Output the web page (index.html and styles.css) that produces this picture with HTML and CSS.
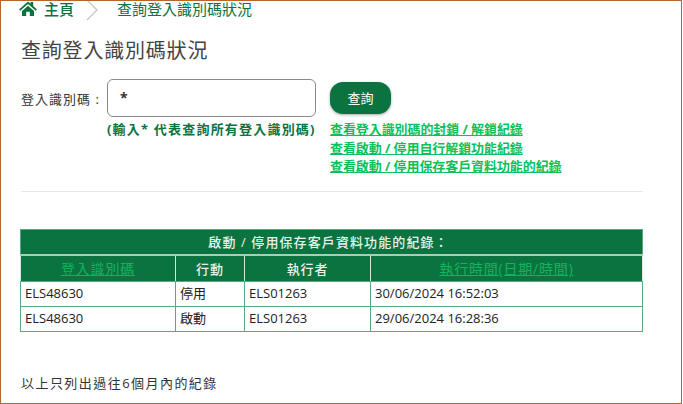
FILE: index.html
```html
<!DOCTYPE html>
<html lang="zh-Hant">
<head>
<meta charset="utf-8">
<title>查詢登入識別碼狀況</title>
<link rel="stylesheet" href="styles.css">
</head>
<body>
<div class="frame">
  <nav class="crumbs">
    <svg class="home" viewBox="0 0 18 15" width="18" height="15"><path d="M9 0.5 L11.5 2.7 V1 H14.2 V5.1 L18 8.4 L16.8 9.8 L9 3 L1.2 9.8 L0 8.4 Z M3 10 L9 4.8 L15 10 V15 H10.8 V10.8 H7.2 V15 H3 Z" fill="#0b7340"/></svg>
    <a class="crumb-home">主頁</a>
    <svg class="chev" viewBox="0 0 12 22" width="12" height="22"><path d="M1 1 L11 11 L1 21" fill="none" stroke="#c4c4c4" stroke-width="1.3"/></svg>
    <a class="crumb-cur">查詢登入識別碼狀況</a>
  </nav>
  <main class="content">
    <h1 class="title">查詢登入識別碼狀況</h1>
    <div class="form-row">
      <label class="lbl">登入識別碼 :</label>
      <div class="input">*</div>
      <button class="btn">查詢</button>
    </div>
    <div class="hint-row">
      <div class="hint">(輸入* 代表查詢所有登入識別碼)</div>
      <div class="links">
        <a>查看登入識別碼的封鎖 / 解鎖紀錄</a>
        <a>查看啟動 / 停用自行解鎖功能紀錄</a>
        <a>查看啟動 / 停用保存客戶資料功能的紀錄</a>
      </div>
    </div>
    <hr class="rule">
    <table class="log">
      <colgroup><col class="c1"><col class="c2"><col class="c3"><col class="c4"></colgroup>
      <thead>
        <tr class="cap"><th colspan="4">啟動 / 停用保存客戶資料功能的紀錄：</th></tr>
        <tr class="head"><th><a>登入識別碼</a></th><th>行動</th><th>執行者</th><th><a>執行時間(日期/時間)</a></th></tr>
      </thead>
      <tbody>
        <tr><td>ELS48630</td><td>停用</td><td>ELS01263</td><td>30/06/2024 16:52:03</td></tr>
        <tr><td>ELS48630</td><td>啟動</td><td>ELS01263</td><td>29/06/2024 16:28:36</td></tr>
      </tbody>
    </table>
    <p class="note">以上只列出過往6個月內的紀錄</p>
  </main>
</div>
</body>
</html>
```
FILE: styles.css
```css
* { box-sizing: border-box; }
html, body { margin: 0; padding: 0; background: #fff; }
body { font-family: "Open Sans", "Noto Sans CJK TC", sans-serif; color: #333; }
.frame { width: 682px; height: 404px; border: 1px solid #b4662c; overflow: hidden; background: #fff; }
.crumbs { display: flex; align-items: center; height: 20px; padding-left: 18px; margin-top: -3px; font-size: 15px; color: #0b7340; }
.home { margin-right: 7px; }
.crumb-home { font-weight: 500; }
.chev { margin: 3px 19px 0 12px; }
.content { padding-left: 20px; width: 642px; }
.title { margin: 21px 0 0; font-size: 20px; line-height: 24px; font-weight: 400; letter-spacing: .8px; color: #444; }
.form-row { display: flex; align-items: center; margin-top: 16px; height: 38px; }
.lbl { width: 86px; font-size: 13px; letter-spacing: 1px; color: #333; white-space: nowrap; }
.input { width: 209px; height: 38px; border: 1px solid #8a8a8a; border-radius: 6px; padding: 7px 12px; font-size: 14px; font-weight: 700; line-height: 22px; color: #333; }
.btn { width: 61px; height: 32px; margin-left: 14px; margin-top: -1px; border: 0; border-radius: 13px; background: #0b7340; color: #fff; font: 13px "Open Sans", "Noto Sans CJK TC", sans-serif; box-shadow: 0 1px 3px rgba(0,0,0,.35); }
.hint-row { display: flex; margin-top: 2px; }
.hint { width: 223px; margin-left: 86px; padding-top: 1px; font-size: 13px; font-weight: 700; letter-spacing: 1.2px; line-height: 18px; color: #0b7340; white-space: nowrap; }
.links { display: flex; flex-direction: column; margin-top: 1px; font-size: 13px; font-weight: 700; letter-spacing: -.08px; line-height: 18.5px; color: #0cbf5c; }
.links a { text-decoration: underline; white-space: nowrap; }
.rule { margin: 15px 0 0; border: 0; border-top: 1px solid #e8e8e8; }
.log { width: 623px; margin-top: 37px; margin-left: -1px; border-collapse: collapse; table-layout: fixed; font-size: 13px; }
.c1 { width: 155px; } .c2 { width: 69px; } .c3 { width: 126px; }
.log th, .log td { border: 1px solid #5ba77f; }
.log th { background: #0b7340; color: #e8f1ea; font-weight: 500; letter-spacing: .9px; text-align: center; padding: 0; }
.cap th { height: 26px; border-bottom: 2px solid #a9cdb8; letter-spacing: 1.1px; padding-right: 6px; }
.head th { height: 26px; border-left-color: #d8e8dd; border-right-color: #d8e8dd; border-top: 0; }
.head a { color: #12b35c; font-size: 14px; font-weight: 400; letter-spacing: .8px; text-decoration: underline; }
.log td { height: 25px; padding: 0 3px 2px 4px; color: #222; }
.note { margin: 43px 0 0; font-size: 13px; letter-spacing: 1.45px; line-height: 16px; color: #333; }
```
